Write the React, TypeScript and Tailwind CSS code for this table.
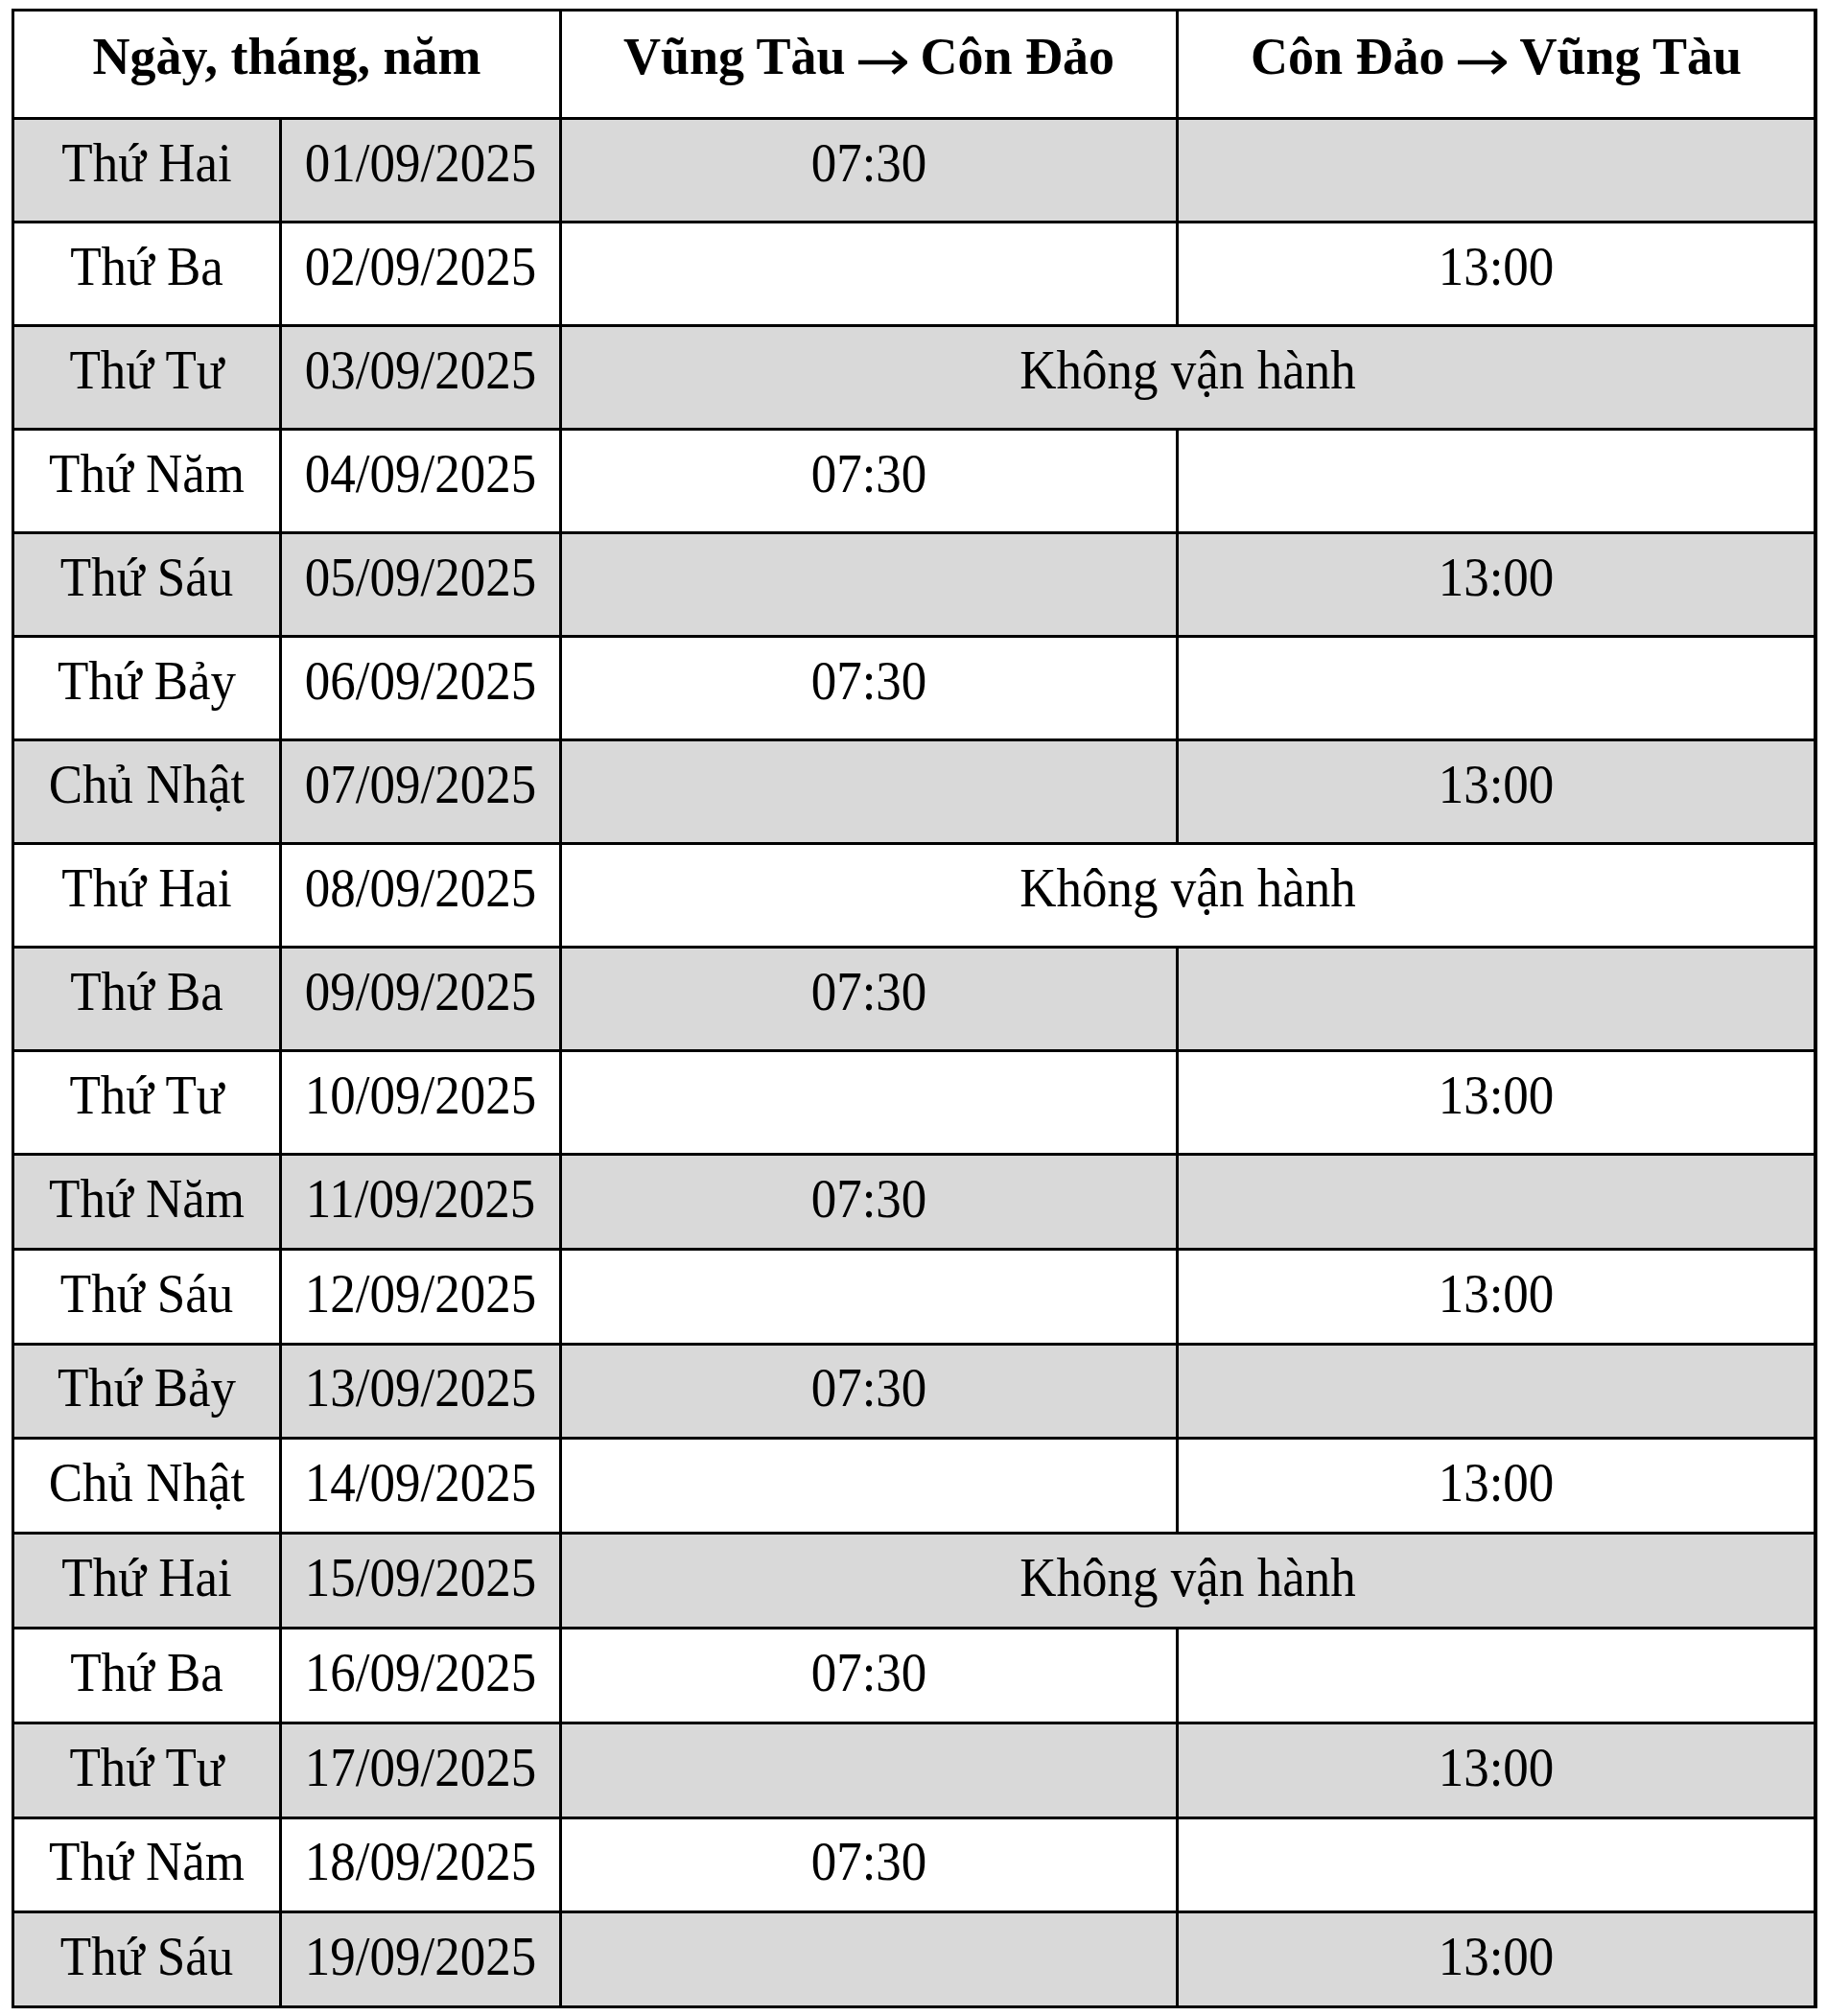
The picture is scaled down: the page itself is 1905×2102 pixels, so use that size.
import React from "react";

type Row = { day: string; date: string; a?: string; b?: string; off?: boolean };

const rows: Row[] = [
  { day: "Thứ Hai", date: "01/09/2025", a: "07:30" },
  { day: "Thứ Ba", date: "02/09/2025", b: "13:00" },
  { day: "Thứ Tư", date: "03/09/2025", off: true },
  { day: "Thứ Năm", date: "04/09/2025", a: "07:30" },
  { day: "Thứ Sáu", date: "05/09/2025", b: "13:00" },
  { day: "Thứ Bảy", date: "06/09/2025", a: "07:30" },
  { day: "Chủ Nhật", date: "07/09/2025", b: "13:00" },
  { day: "Thứ Hai", date: "08/09/2025", off: true },
  { day: "Thứ Ba", date: "09/09/2025", a: "07:30" },
  { day: "Thứ Tư", date: "10/09/2025", b: "13:00" },
  { day: "Thứ Năm", date: "11/09/2025", a: "07:30" },
  { day: "Thứ Sáu", date: "12/09/2025", b: "13:00" },
  { day: "Thứ Bảy", date: "13/09/2025", a: "07:30" },
  { day: "Chủ Nhật", date: "14/09/2025", b: "13:00" },
  { day: "Thứ Hai", date: "15/09/2025", off: true },
  { day: "Thứ Ba", date: "16/09/2025", a: "07:30" },
  { day: "Thứ Tư", date: "17/09/2025", b: "13:00" },
  { day: "Thứ Năm", date: "18/09/2025", a: "07:30" },
  { day: "Thứ Sáu", date: "19/09/2025", b: "13:00" },
];

function Cell({
  children,
  grey,
  span,
  compact,
}: {
  children?: React.ReactNode;
  grey: boolean;
  span?: boolean;
  compact: boolean;
}) {
  return (
    <div
      className={`flex items-center justify-center text-[53px] leading-none text-black whitespace-nowrap ${
        compact ? "pb-[5px]" : "pb-[14px]"
      } ${grey ? "bg-[#d9d9d9]" : "bg-white"} ${span ? "col-span-2" : ""}`}
    >
      {children ? <span className="inline-block scale-y-[1.08]">{children}</span> : null}
    </div>
  );
}

function Arrow() {
  return (
    <svg
      width="51"
      height="26"
      viewBox="0 0 51 26"
      className="inline-block align-middle"
      fill="none"
      stroke="black"
      strokeWidth="4.5"
    >
      <path d="M0 13H48" />
      <path d="M36 2L49 13L36 24" strokeLinejoin="miter" />
    </svg>
  );
}

const headCls =
  "flex items-center justify-center bg-white pb-[16px] text-[54px] font-bold leading-none text-black whitespace-nowrap";

export default function App() {
  return (
    <div className="min-h-[2102px] w-[1905px] bg-white pl-[12px] pt-[9px] font-['Liberation_Serif','Times_New_Roman',serif]">
      <div className="grid w-[1883px] grid-cols-[276px_289px_640px_662px] grid-rows-[110px_repeat(10,105px)_repeat(9,95.8px)] gap-[3px] bg-black p-[3px]">
        <div className={`col-span-2 ${headCls}`}>
          <span>Ngày, tháng, năm</span>
        </div>
        <div className={headCls}>
          <span>
            Vũng Tàu&nbsp;<Arrow />&nbsp;Côn Đảo
          </span>
        </div>
        <div className={headCls}>
          <span>
            Côn Đảo&nbsp;<Arrow />&nbsp;Vũng Tàu
          </span>
        </div>
        {rows.map((r, i) => {
          const grey = i % 2 === 0;
          const compact = i >= 10;
          return (
            <React.Fragment key={i}>
              <Cell grey={grey} compact={compact}>{r.day}</Cell>
              <Cell grey={grey} compact={compact}>{r.date}</Cell>
              {r.off ? (
                <Cell grey={grey} compact={compact} span>
                  Không vận hành
                </Cell>
              ) : (
                <>
                  <Cell grey={grey} compact={compact}>{r.a}</Cell>
                  <Cell grey={grey} compact={compact}>{r.b}</Cell>
                </>
              )}
            </React.Fragment>
          );
        })}
      </div>
    </div>
  );
}
